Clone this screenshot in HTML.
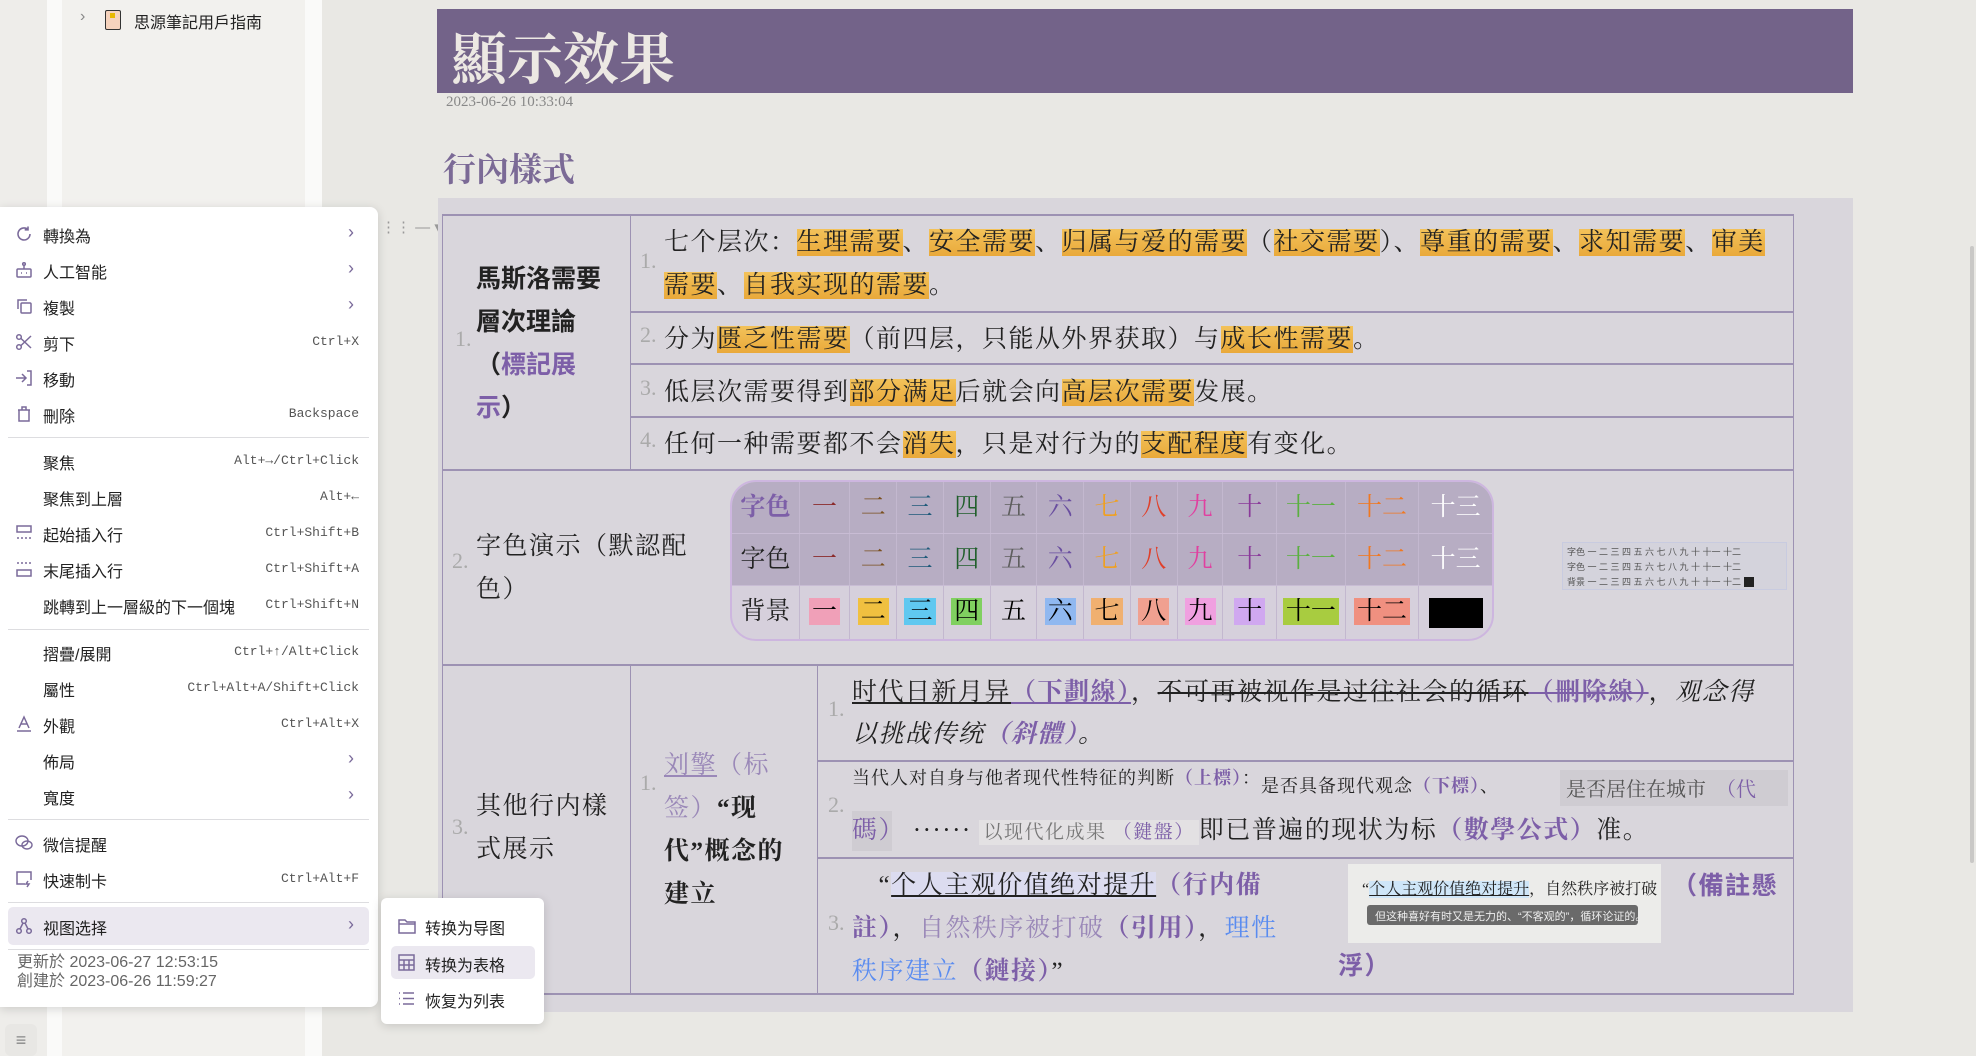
<!DOCTYPE html>
<html><head><meta charset="utf-8">
<style>
*{margin:0;padding:0;box-sizing:border-box}
body{width:1976px;height:1056px;overflow:hidden;position:relative;background:#e9e8e4;font-family:"Liberation Sans","Noto Sans CJK SC",sans-serif}
.a{position:absolute;white-space:nowrap}
.serif{font-family:"Liberation Serif","Noto Serif CJK SC",serif}
.menu{position:absolute;left:0;top:207px;width:378px;height:800px;background:#fff;border-radius:0 8px 8px 0;box-shadow:0 2px 10px rgba(0,0,0,.15)}
.mi{position:absolute;left:0;width:378px;height:36px;font-size:16px;color:#222}
.mi .t{position:absolute;left:43px;top:7px}
.mi .k{position:absolute;right:19px;top:10px;font-family:"Liberation Mono",monospace;font-size:13px;color:#555}
.mi .c{position:absolute;right:24px;top:6px;color:#7a6a9a;font-size:18px}
.mi svg{position:absolute;left:15px;top:9px}
.sep{position:absolute;left:8px;width:361px;height:1px;background:#dddde0}
.hl{background:linear-gradient(180deg,#f3c25a,#e9a93a);}
.n{color:#aaa;font-size:22px}
.tx{font-size:25px;color:#222;letter-spacing:1.5px}
.pu{color:#7d5fa8}
.line{position:absolute;background:#9d92b3}
.ct{position:absolute;left:730px;top:480px;width:764px;height:161px;border:2px solid #cdb6df;border-radius:26px;overflow:hidden;background:#d6d0dc}
.ct .r{display:flex;height:52px;border-bottom:1px solid #c8bcd4}
.ct .r.d{background:#b7adc3}
.ct .r div{text-align:center;font-size:25px;line-height:52px;border-right:1px solid #c3b8cf;font-family:"Liberation Serif","Noto Serif CJK SC",serif}
.ct span{padding:0 3px}
</style></head><body>
<!-- sidebar -->
<div class="a" style="left:0;top:0;width:47px;height:1056px;background:#eeedea"></div>
<div class="a" style="left:47px;top:0;width:15px;height:1056px;background:#fafaf9"></div>
<div class="a" style="left:62px;top:0;width:243px;height:1056px;background:#f2f1ee"></div>
<div class="a" style="left:305px;top:0;width:17px;height:1056px;background:#fafaf9"></div>
<div class="a" style="left:80px;top:8px;font-size:16px;color:#888">›</div>
<div class="a" style="left:105px;top:10px;width:16px;height:20px;background:#f6d3bd;border:1.5px solid #333;border-radius:2px"><div style="position:absolute;left:4px;top:2px;width:5px;height:5px;background:#e8b800"></div></div>
<div class="a" style="left:134px;top:9px;font-size:16px;color:#222">思源筆記用戶指南</div>
<div class="a" style="left:5px;top:1024px;width:32px;height:32px;background:#e8e7e4;border-radius:6px;color:#888;font-size:18px;text-align:center;line-height:32px">≡</div>

<!-- content -->
<div class="a" style="left:437px;top:9px;width:1416px;height:84px;background:#736389"></div>
<div class="a serif" style="left:451px;top:16px;font-size:56px;font-weight:bold;color:#ece8e3">顯示效果</div>
<div class="a serif" style="left:446px;top:94px;font-size:15px;color:#888">2023-06-26 10:33:04</div>
<div class="a serif" style="left:443px;top:144px;font-size:33px;font-weight:bold;color:#7b6a96">行內樣式</div>
<div class="a" style="left:381px;top:218px;font-size:15px;color:#999">⋮⋮ — ▾</div>
<div class="a" style="left:438px;top:198px;width:1415px;height:814px;background:#d9d6dc"></div>

<!-- table lines -->
<div class="line" style="left:442px;top:214px;width:1352px;height:2px"></div>
<div class="line" style="left:442px;top:469px;width:1352px;height:2px"></div>
<div class="line" style="left:442px;top:664px;width:1352px;height:2px"></div>
<div class="line" style="left:442px;top:993px;width:1352px;height:2px"></div>
<div class="line" style="left:442px;top:214px;width:1px;height:780px"></div>
<div class="line" style="left:1793px;top:214px;width:1px;height:780px"></div>
<div class="line" style="left:630px;top:214px;width:1px;height:256px"></div>
<div class="line" style="left:630px;top:664px;width:1px;height:330px"></div>
<div class="line" style="left:817px;top:664px;width:1px;height:330px"></div>
<div class="line" style="left:630px;top:311px;width:1164px;height:2px"></div>
<div class="line" style="left:630px;top:363px;width:1164px;height:2px"></div>
<div class="line" style="left:630px;top:416px;width:1164px;height:2px"></div>
<div class="line" style="left:817px;top:760px;width:977px;height:2px"></div>
<div class="line" style="left:817px;top:857px;width:977px;height:2px"></div>

<!-- row1 -->
<div class="a serif n" style="left:455px;top:326px">1.</div>
<div class="a tx" style="left:476px;top:258px;font-weight:bold;line-height:43px;letter-spacing:0">馬斯洛需要<br>層次理論<br>（<span class="pu">標記展</span><br><span class="pu">示</span>）</div>
<div class="a serif n" style="left:640px;top:248px">1.</div>
<div class="a tx serif" style="left:664px;top:222px">七个层次：<span class="hl">生理需要</span>、<span class="hl">安全需要</span>、<span class="hl">归属与爱的需要</span>（<span class="hl">社交需要</span>）、<span class="hl">尊重的需要</span>、<span class="hl">求知需要</span>、<span class="hl">审美</span></div>
<div class="a tx serif" style="left:664px;top:265px"><span class="hl">需要</span>、<span class="hl">自我实现的需要</span>。</div>
<div class="a serif n" style="left:640px;top:322px">2.</div>
<div class="a tx serif" style="left:664px;top:319px">分为<span class="hl">匮乏性需要</span>（前四层，只能从外界获取）与<span class="hl">成长性需要</span>。</div>
<div class="a serif n" style="left:640px;top:375px">3.</div>
<div class="a tx serif" style="left:664px;top:372px">低层次需要得到<span class="hl">部分满足</span>后就会向<span class="hl">高层次需要</span>发展。</div>
<div class="a serif n" style="left:640px;top:427px">4.</div>
<div class="a tx serif" style="left:664px;top:424px">任何一种需要都不会<span class="hl">消失</span>，只是对行为的<span class="hl">支配程度</span>有变化。</div>

<!-- row2 -->
<div class="a serif n" style="left:452px;top:548px">2.</div>
<div class="a tx serif" style="left:476px;top:525px;line-height:43px">字色演示（默認配<br>色）</div>
<div class="ct">
<div class="r d"><div style="width:68px;color:#7d5fa8;font-weight:bold">字色</div><div style="width:51px;color:#8b2b2b">一</div><div style="width:47px;color:#7a4f1e">二</div><div style="width:47px;color:#1f5a7a">三</div><div style="width:47px;color:#1f5e2a">四</div><div style="width:47px;color:#5e5e5e">五</div><div style="width:47px;color:#6a4fa0">六</div><div style="width:47px;color:#f0a020">七</div><div style="width:47px;color:#e0402a">八</div><div style="width:46px;color:#e040a0">九</div><div style="width:54px;color:#8a3a9a">十</div><div style="width:69px;color:#5ab040">十一</div><div style="width:74px;color:#f07820">十二</div><div style="width:73px;color:#fff;border:0">十三</div></div>
<div class="r d"><div style="width:68px;color:#222">字色</div><div style="width:51px;color:#8b2b2b">一</div><div style="width:47px;color:#7a4f1e">二</div><div style="width:47px;color:#1f5a7a">三</div><div style="width:47px;color:#1f5e2a">四</div><div style="width:47px;color:#5e5e5e">五</div><div style="width:47px;color:#6a4fa0">六</div><div style="width:47px;color:#f0a020">七</div><div style="width:47px;color:#e0402a">八</div><div style="width:46px;color:#e040a0">九</div><div style="width:54px;color:#8a3a9a">十</div><div style="width:69px;color:#5ab040">十一</div><div style="width:74px;color:#f07820">十二</div><div style="width:73px;color:#fff;border:0">十三</div></div>
<div class="r" style="border:0;height:57px"><div style="width:68px;color:#222">背景</div><div style="width:51px"><span style="background:#f0a0b8">一</span></div><div style="width:47px"><span style="background:#f0c040">二</span></div><div style="width:47px"><span style="background:#60c8f0">三</span></div><div style="width:47px"><span style="background:#80d060">四</span></div><div style="width:47px">五</div><div style="width:47px"><span style="background:#90b8f0">六</span></div><div style="width:47px"><span style="background:#f0b070">七</span></div><div style="width:47px"><span style="background:#f0a090">八</span></div><div style="width:46px"><span style="background:#f0a0e0">九</span></div><div style="width:54px"><span style="background:#d0a8f0">十</span></div><div style="width:69px"><span style="background:#a8cc40">十一</span></div><div style="width:74px"><span style="background:#f09080">十二</span></div><div style="width:73px;border:0"><span style="background:#000;display:inline-block;width:54px;height:30px;vertical-align:middle"></span></div></div>
</div>
<div class="a" style="left:1562px;top:542px;width:225px;height:48px;background:#d4d3dc;border:1px solid #c8cbe0;font-size:9px;line-height:15px;padding:2px 4px;color:#555">字色 一 二 三 四 五 六 七 八 九 十 十一 十二<br>字色 一 二 三 四 五 六 七 八 九 十 十一 十二<br>背景 一 二 三 四 五 六 七 八 九 十 十一 十二 <span style="background:#222;color:#222">■■</span></div>

<!-- row3 -->
<div class="a serif n" style="left:452px;top:814px">3.</div>
<div class="a tx serif" style="left:476px;top:785px;line-height:43px">其他行内樣<br>式展示</div>
<div class="a serif n" style="left:640px;top:770px">1.</div>
<div class="a tx serif" style="left:664px;top:744px;line-height:43px;font-weight:normal"><span class="pu" style="text-decoration:underline;color:#9a88b8">刘擎</span><span style="color:#9a88b8">（标</span><br><span style="color:#9a88b8">签）</span><b>“现</b><br><b>代”概念的</b><br><b>建立</b></div>
<div class="a serif n" style="left:828px;top:696px">1.</div>
<div class="a tx serif" style="left:852px;top:672px"><span style="text-decoration:underline">时代日新月异</span><span class="pu" style="text-decoration:underline;font-weight:bold">（下劃線）</span>，<span style="text-decoration:line-through">不可再被视作是过往社会的循环</span><span class="pu" style="text-decoration:line-through;font-weight:bold">（刪除線）</span>，<i>观念得</i></div>
<div class="a tx serif" style="left:852px;top:714px;font-style:italic">以挑战传统<span class="pu" style="font-weight:bold">（斜體）</span>。</div>
<div class="a serif n" style="left:828px;top:792px">2.</div>
<div class="a serif" style="left:852px;top:764px;font-size:18px;color:#222;letter-spacing:1px">当代人对自身与他者现代性特征的判断<span class="pu" style="font-weight:bold">（上標）</span>：<span style="position:relative;top:8px">是否具备现代观念<span class="pu" style="font-weight:bold">（下標）</span>、</span></div>
<div class="a serif" style="left:1560px;top:770px;width:228px;height:36px;background:#cfccd2;font-size:20px;color:#555;padding:3px 6px">是否居住在城市　<span class="pu">（代</span></div>
<div class="a serif" style="left:852px;top:811px;width:40px;height:40px;background:#cfccd2"></div>
<div class="a tx serif" style="left:852px;top:810px"><span class="pu">碼）</span> ······ <span style="background:#e3e1e3;font-size:19px;color:#777;padding:2px 4px">以现代化成果 <span class="pu">（鍵盤）</span></span>即已普遍的现状为标<span class="pu" style="font-weight:bold">（數學公式）</span>准。</div>
<div class="a serif n" style="left:828px;top:910px">3.</div>
<div class="a tx serif" style="left:852px;top:864px;line-height:43px">　“<span style="background:#dcdcf0;text-decoration:underline">个人主观价值绝对提升</span><span class="pu" style="font-weight:bold">（行内備</span><br><span class="pu" style="font-weight:bold">註）</span>，<span style="color:#9a88b8">自然秩序被打破</span><span class="pu" style="font-weight:bold">（引用）</span>，<span style="color:#5a8cf0">理性</span><br><span style="color:#5a8cf0">秩序建立</span><span class="pu" style="font-weight:bold">（鏈接）</span>”</div>
<div class="a" style="left:1348px;top:864px;width:313px;height:79px;background:#ececea"></div>
<div class="a serif" style="left:1362px;top:876px;font-size:16px;color:#222">“<span style="background:#cfe6f8;text-decoration:underline">个人主观价值绝对提升</span>，自然秩序被打破</div>
<div class="a" style="left:1367px;top:905px;width:271px;height:20px;background:#6a6a6a;border-radius:3px;font-size:11px;color:#eee;padding:3px 8px">但这种喜好有时又是无力的、“不客观的”，循环论证的。</div>
<div class="a tx" style="left:1672px;top:866px;font-weight:bold;color:#7d5fa8">（備註懸</div>
<div class="a tx" style="left:1338px;top:946px;font-weight:bold;color:#7d5fa8">浮）</div>
<div class="a" style="left:1970px;top:246px;width:4px;height:617px;background:#c9c8c6;border-radius:2px"></div>

<!-- context menu -->
<div class="menu">
<div class="mi" style="top:9px"><svg width="18" height="18" viewBox="0 0 18 18" fill="none" stroke="#7a6a9a" stroke-width="1.6"><path d="M15 9a6 6 0 1 1-2-4.5"/><path d="M13 1.5v3.3h-3.3"/></svg><span class="t">轉換為</span><span class="c">›</span></div>
<div class="mi" style="top:45px"><svg width="18" height="18" viewBox="0 0 18 18" fill="none" stroke="#7a6a9a" stroke-width="1.5"><rect x="2" y="8" width="14" height="8" rx="1"/><path d="M9 8V4"/><circle cx="9" cy="3" r="1.3"/><path d="M6 12h1M11 12h1"/></svg><span class="t">人工智能</span><span class="c">›</span></div>
<div class="mi" style="top:81px"><svg width="18" height="18" viewBox="0 0 18 18" fill="none" stroke="#7a6a9a" stroke-width="1.5"><rect x="6" y="6" width="10" height="10" rx="1"/><path d="M3 12V3h9"/></svg><span class="t">複製</span><span class="c">›</span></div>
<div class="mi" style="top:117px"><svg width="18" height="18" viewBox="0 0 18 18" fill="none" stroke="#7a6a9a" stroke-width="1.5"><circle cx="4" cy="4" r="2.3"/><circle cx="4" cy="14" r="2.3"/><path d="M6 5.5L16 15M6 12.5L16 3"/></svg><span class="t">剪下</span><span class="k">Ctrl+X</span></div>
<div class="mi" style="top:153px"><svg width="18" height="18" viewBox="0 0 18 18" fill="none" stroke="#7a6a9a" stroke-width="1.5"><path d="M1 9h10M7 5l4 4-4 4M12 2h4v14h-4"/></svg><span class="t">移動</span></div>
<div class="mi" style="top:189px"><svg width="18" height="18" viewBox="0 0 18 18" fill="none" stroke="#7a6a9a" stroke-width="1.5"><path d="M3 5h12M7 5V2h4v3M4 5v11h10V5"/></svg><span class="t">刪除</span><span class="k">Backspace</span></div>
<div class="sep" style="top:230px"></div>
<div class="mi" style="top:236px"><span class="t">聚焦</span><span class="k">Alt+→/Ctrl+Click</span></div>
<div class="mi" style="top:272px"><span class="t">聚焦到上層</span><span class="k">Alt+←</span></div>
<div class="mi" style="top:308px"><svg width="18" height="18" viewBox="0 0 18 18" fill="none" stroke="#7a6a9a" stroke-width="1.5"><rect x="2" y="2" width="14" height="6"/><path d="M2 14h14" stroke-dasharray="2 2"/></svg><span class="t">起始插入行</span><span class="k">Ctrl+Shift+B</span></div>
<div class="mi" style="top:344px"><svg width="18" height="18" viewBox="0 0 18 18" fill="none" stroke="#7a6a9a" stroke-width="1.5"><path d="M2 3h14" stroke-dasharray="2 2"/><rect x="2" y="10" width="14" height="6"/></svg><span class="t">末尾插入行</span><span class="k">Ctrl+Shift+A</span></div>
<div class="mi" style="top:380px"><span class="t">跳轉到上一層級的下一個塊</span><span class="k">Ctrl+Shift+N</span></div>
<div class="sep" style="top:422px"></div>
<div class="mi" style="top:427px"><span class="t">摺疊/展開</span><span class="k">Ctrl+↑/Alt+Click</span></div>
<div class="mi" style="top:463px"><span class="t">屬性</span><span class="k">Ctrl+Alt+A/Shift+Click</span></div>
<div class="mi" style="top:499px"><svg width="18" height="18" viewBox="0 0 18 18" fill="none" stroke="#7a6a9a" stroke-width="1.5"><path d="M4 13L9 2l5 11M6 9h6M2 16h14"/></svg><span class="t">外觀</span><span class="k">Ctrl+Alt+X</span></div>
<div class="mi" style="top:535px"><span class="t">佈局</span><span class="c">›</span></div>
<div class="mi" style="top:571px"><span class="t">寬度</span><span class="c">›</span></div>
<div class="sep" style="top:612px"></div>
<div class="mi" style="top:618px"><svg width="18" height="18" viewBox="0 0 18 18" fill="none" stroke="#7a6a9a" stroke-width="1.4"><ellipse cx="7" cy="7" rx="6" ry="5"/><ellipse cx="12" cy="11" rx="5" ry="4"/></svg><span class="t">微信提醒</span></div>
<div class="mi" style="top:654px"><svg width="18" height="18" viewBox="0 0 18 18" fill="none" stroke="#7a6a9a" stroke-width="1.5"><path d="M10 14H2V2h14v8"/><path d="M13 11l-2 3h3l-2 3"/></svg><span class="t">快速制卡</span><span class="k">Ctrl+Alt+F</span></div>
<div class="sep" style="top:695px"></div>
<div class="a" style="left:8px;top:700px;width:361px;height:38px;background:#ebe8f0;border-radius:5px"></div>
<div class="mi" style="top:701px"><svg width="18" height="18" viewBox="0 0 18 18" fill="none" stroke="#7a6a9a" stroke-width="1.5"><circle cx="9" cy="4" r="2.3"/><circle cx="4" cy="14" r="2.3"/><circle cx="14" cy="14" r="2.3"/><path d="M8 6l-3 6M10 6l3 6"/></svg><span class="t">视图选择</span><span class="c">›</span></div>
<div class="sep" style="top:742px"></div>
<div class="a" style="left:17px;top:746px;font-size:16px;color:#666;line-height:19px">更新於 2023-06-27 12:53:15<br>創建於 2023-06-26 11:59:27</div>
</div>

<!-- submenu -->
<div class="a" style="left:381px;top:898px;width:163px;height:126px;background:#fff;border-radius:6px;box-shadow:0 2px 10px rgba(0,0,0,.15)"></div>
<div class="a" style="left:391px;top:946px;width:144px;height:33px;background:#ebe8f0;border-radius:5px"></div>
<svg class="a" style="left:398px;top:918px" width="18" height="16" viewBox="0 0 18 16" fill="none" stroke="#7a6a9a" stroke-width="1.5"><path d="M1 2h6l2 2h8v11H1z"/><path d="M1 6h16"/></svg>
<div class="a" style="left:425px;top:915px;font-size:16px;color:#222">转换为导图</div>
<svg class="a" style="left:398px;top:954px" width="17" height="17" viewBox="0 0 17 17" fill="none" stroke="#7a6a9a" stroke-width="1.5"><rect x="1" y="1" width="15" height="15"/><path d="M1 6h15M1 11h15M6 6v10M11 6v10"/></svg>
<div class="a" style="left:425px;top:952px;font-size:16px;color:#222">转换为表格</div>
<svg class="a" style="left:398px;top:991px" width="17" height="15" viewBox="0 0 17 15" fill="none" stroke="#7a6a9a" stroke-width="1.5"><path d="M1 2h1M1 7.5h1M1 13h1M5 2h11M5 7.5h11M5 13h11"/></svg>
<div class="a" style="left:425px;top:988px;font-size:16px;color:#222">恢复为列表</div>
</body></html>
